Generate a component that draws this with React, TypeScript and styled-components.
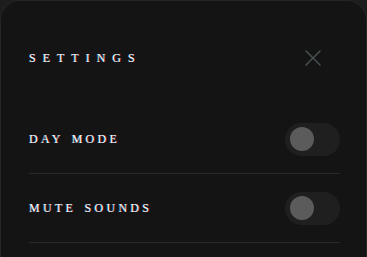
import React, { FC, useState } from "react";
import styled, { createGlobalStyle } from "styled-components";

const GlobalStyle = createGlobalStyle`
  html, body {
    margin: 0;
    padding: 0;
    background: #1d1d1d;
    overflow: hidden;
  }
  * {
    box-sizing: border-box;
  }
`;

interface ToggleProps {
  label: string;
  checked: boolean;
  onChange: () => void;
}

const ToggleRow: FC<ToggleProps> = ({ label, checked, onChange }) => (
  <Row>
    <RowLabel>{label}</RowLabel>
    <Switch $on={checked} onClick={onChange} role="switch" aria-checked={checked}>
      <Knob $on={checked} />
    </Switch>
  </Row>
);

const App: FC = () => {
  const [dayMode, setDayMode] = useState(false);
  const [muted, setMuted] = useState(false);

  return (
    <>
      <GlobalStyle />
      <Panel>
        <Header>
          <Title>SETTINGS</Title>
          <CloseButton aria-label="close">
            <svg width="16" height="16" viewBox="0 0 16 16" fill="none">
              <path
                d="M1 1L15 15M15 1L1 15"
                stroke="#4c5555"
                strokeWidth="1.4"
                strokeLinecap="round"
              />
            </svg>
          </CloseButton>
        </Header>
        <ToggleRow
          label="DAY MODE"
          checked={dayMode}
          onChange={() => setDayMode(!dayMode)}
        />
        <ToggleRow
          label="MUTE SOUNDS"
          checked={muted}
          onChange={() => setMuted(!muted)}
        />
      </Panel>
    </>
  );
};

export default App;

const glitch = `
  color: #f7f7f7;
  text-shadow: -0.6px 0 rgba(0, 190, 255, 0.6), 0.6px 0 rgba(255, 40, 60, 0.6);
`;

const Panel = styled.div`
  width: 100%;
  min-height: 280px;
  padding: 40px 26px 0 28px;
  background: #141414;
  border: 1px solid #262626;
  border-radius: 20px;
  font-family: "Liberation Serif", serif;
`;

const Header = styled.div`
  display: flex;
  align-items: center;
  justify-content: space-between;
  height: 34px;
  margin-bottom: 30px;
`;

const Title = styled.h1`
  margin: 0;
  font-size: 12px;
  font-weight: normal;
  letter-spacing: 7px;
  ${glitch}
`;

const CloseButton = styled.button`
  display: flex;
  align-items: center;
  justify-content: center;
  width: 28px;
  height: 28px;
  margin-right: 13px;
  padding: 0;
  border: none;
  background: transparent;
  cursor: pointer;
`;

const Row = styled.div`
  display: flex;
  align-items: center;
  justify-content: space-between;
  height: 69px;
  border-bottom: 1px solid #2a2a2a;
`;

const RowLabel = styled.span`
  font-size: 12px;
  letter-spacing: 3.3px;
  word-spacing: 2px;
  ${glitch}
`;

const Switch = styled.button<{ $on: boolean }>`
  display: flex;
  align-items: center;
  width: 55px;
  height: 33px;
  padding: 0 5px;
  border: none;
  border-radius: 17px;
  background: ${(p) => (p.$on ? "#3a3a3a" : "#1f1f1f")};
  cursor: pointer;
`;

const Knob = styled.span<{ $on: boolean }>`
  width: 24px;
  height: 24px;
  border-radius: 50%;
  background: #5b5b5b;
  transform: translateX(${(p) => (p.$on ? "21px" : "0")});
  transition: transform 0.2s;
`;
